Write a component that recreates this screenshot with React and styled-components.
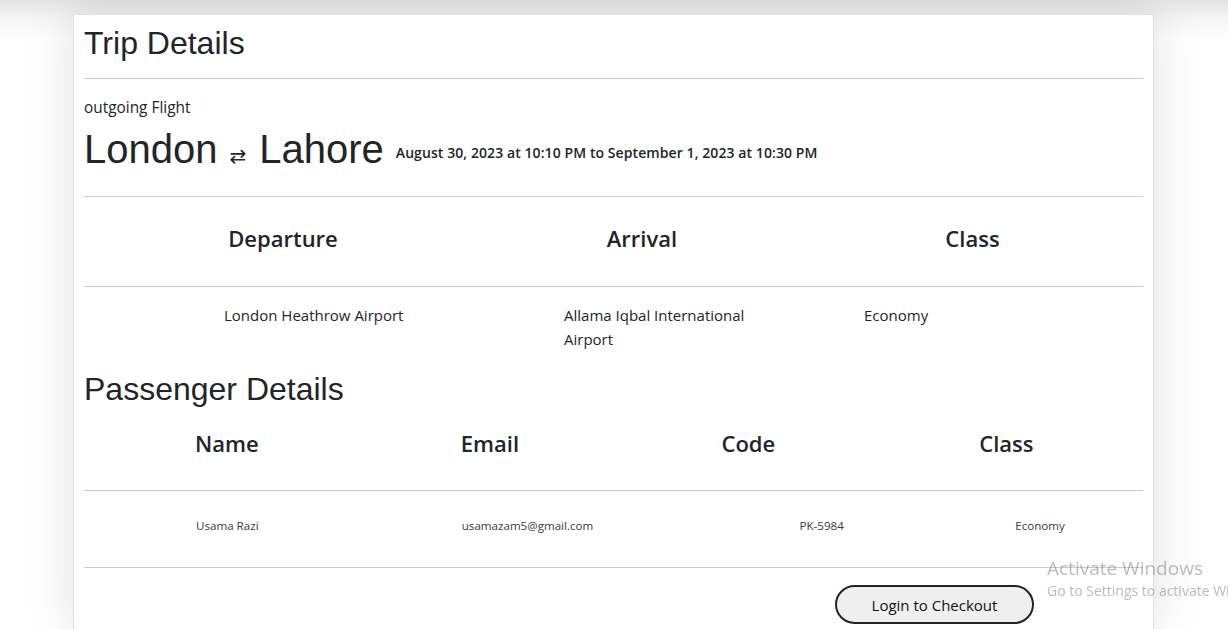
import React from 'react';
import styled, { createGlobalStyle } from 'styled-components';

const GlobalStyle = createGlobalStyle`
  html, body {
    margin: 0;
    padding: 0;
    height: 100%;
    overflow: hidden;
  }
  body {
    background: linear-gradient(to bottom, #e4e4e4 0, #f4f4f4 18px, #fff 40px);
    color: #212529;
    font-family: "Open Sans", "Noto Sans", sans-serif;
  }
`;

const tripColumns = [
  { title: 'Departure', value: 'London Heathrow Airport', indent: 140 },
  { title: 'Arrival', value: 'Allama Iqbal International Airport', indent: 82 },
  { title: 'Class', value: 'Economy', indent: 62 },
];

const passengerColumns = [
  { title: 'Name', value: 'Usama Razi', head: 111, indent: 112 },
  { title: 'Email', value: 'usamazam5@gmail.com', head: 112, indent: 113 },
  { title: 'Code', value: 'PK-5984', head: 108, indent: 186 },
  { title: 'Class', value: 'Economy', head: 101, indent: 137 },
];

export default function App() {
  return (
    <Page>
      <GlobalStyle />
      <Card>
        <Title>Trip Details</Title>
        <Rule />
        <Label>outgoing Flight</Label>
        <Route>
          <City>London</City>
          <Swap>⇄</Swap>
          <City>Lahore</City>
          <Dates>August 30, 2023 at 10:10 PM to September 1, 2023 at 10:30 PM</Dates>
        </Route>
        <Rule $gap={24} />

        <TripGrid>
          {tripColumns.map(c => (
            <TripHead key={c.title}>{c.title}</TripHead>
          ))}
          <GridRule />
          {tripColumns.map(c => (
            <TripCell key={c.title} $indent={c.indent}>
              <CellText>{c.value}</CellText>
            </TripCell>
          ))}
        </TripGrid>

        <Title $top={20}>Passenger Details</Title>
        <PassengerGrid>
          {passengerColumns.map(c => (
            <PassengerHead key={c.title} $indent={c.head}>{c.title}</PassengerHead>
          ))}
          <GridRule />
          {passengerColumns.map(c => (
            <PassengerCell key={c.title} $indent={c.indent}>{c.value}</PassengerCell>
          ))}
          <GridRule />
        </PassengerGrid>

        <Footer>
          <CheckoutButton>Login to Checkout</CheckoutButton>
        </Footer>
      </Card>

      <Watermark>
        <WatermarkTitle>Activate Windows</WatermarkTitle>
        <WatermarkText>Go to Settings to activate Windows.</WatermarkText>
      </Watermark>
    </Page>
  );
}

const Page = styled.div`
  display: flex;
  justify-content: center;
  padding-top: 14px;
  padding-right: 1px;
  height: 629px;
  box-sizing: border-box;
`;

const Card = styled.div`
  width: 1081px;
  background: #fff;
  border: 1px solid #e2e2e2;
  border-bottom: none;
  box-shadow: 0 0 45px rgba(0, 0, 0, 0.13);
  padding: 10px 10px 0 10px;
  box-sizing: border-box;
  display: flex;
  flex-direction: column;
`;

const Title = styled.h2`
  font-family: "Liberation Sans", Arial, sans-serif;
  font-weight: 400;
  font-size: 32px;
  line-height: 37px;
  margin: ${p => p.$top || 0}px 0 0 0;
  color: #212529;
`;

const Rule = styled.hr`
  border: none;
  border-top: 1px solid #cbcbcb;
  margin: ${p => p.$gap || 16}px 0 0 0;
  width: 100%;
`;

const Label = styled.div`
  font-size: 15.4px;
  line-height: 22px;
  margin-top: 18px;
`;

const Route = styled.div`
  margin-top: 7px;
  white-space: nowrap;
`;

const City = styled.span`
  font-family: "Liberation Sans", Arial, sans-serif;
  font-size: 40px;
  line-height: 46px;
`;

const Swap = styled.span`
  font-family: "DejaVu Sans", sans-serif;
  font-size: 20px;
  margin: 0 13px 0 12px;
`;

const Dates = styled.span`
  font-size: 14px;
  font-weight: 600;
  margin-left: 12px;
  letter-spacing: 0.08px;
  vertical-align: 5px;
`;

const TripGrid = styled.div`
  display: grid;
  grid-template-columns: 398px 320px 1fr;
`;

const GridRule = styled.div`
  grid-column: 1 / -1;
  height: 1px;
  background: #cbcbcb;
`;

const TripHead = styled.div`
  font-size: 22px;
  font-weight: 600;
  line-height: 30px;
  text-align: center;
  padding: 26px 0 33px;
`;

const TripCell = styled.div`
  padding: 16px 0 0 ${p => p.$indent}px;
  font-size: 15px;
  line-height: 24px;
`;

const CellText = styled.div`
  max-width: 200px;
`;

const PassengerGrid = styled.div`
  display: grid;
  grid-template-columns: repeat(4, 1fr);
`;

const PassengerHead = styled.div`
  font-size: 22px;
  font-weight: 600;
  line-height: 30px;
  padding: 20px 0 32px ${p => p.$indent}px;
`;

const PassengerCell = styled.div`
  font-size: 11.6px;
  font-weight: 400;
  line-height: 17px;
  color: #3a3a3a;
  padding: 26px 0 33px ${p => p.$indent}px;
`;

const Footer = styled.div`
  display: flex;
  justify-content: flex-end;
  padding: 17px 109px 0 0;
`;

const CheckoutButton = styled.button`
  width: 199px;
  height: 39px;
  border: 2px solid #222;
  border-radius: 20px;
  background: #efefef;
  color: #111;
  font-family: "Open Sans", "Noto Sans", sans-serif;
  font-size: 15px;
  cursor: pointer;
`;

const Watermark = styled.div`
  position: fixed;
  left: 1047px;
  top: 555px;
  white-space: nowrap;
  color: rgba(120, 120, 120, 0.5);
  pointer-events: none;
`;

const WatermarkTitle = styled.div`
  font-size: 19px;
  line-height: 26px;
`;

const WatermarkText = styled.div`
  font-size: 14px;
  line-height: 20px;
`;
